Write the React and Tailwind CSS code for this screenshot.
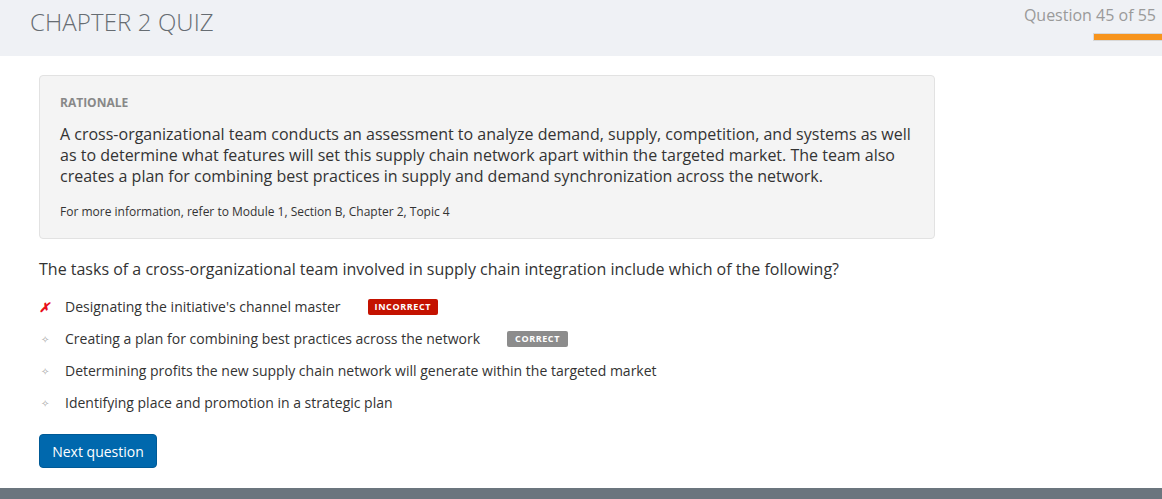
export default function App() {
  const answers = [
    { text: "Designating the initiative's channel master", mark: "x", badge: "INCORRECT" },
    { text: "Creating a plan for combining best practices across the network", mark: "dot", badge: "CORRECT" },
    { text: "Determining profits the new supply chain network will generate within the targeted market", mark: "dot" },
    { text: "Identifying place and promotion in a strategic plan", mark: "dot" },
  ];
  return (
    <div className="w-[1162px] h-[499px] bg-white flex flex-col overflow-hidden" style={{ fontFamily: '"Open Sans", sans-serif' }}>
      <header className="h-[56px] bg-[#eff1f5] flex justify-between shrink-0">
        <h1 className="pl-[30px] pt-[5px] text-[24px] font-light text-[#666c72] leading-[34px] tracking-[0.1px]">CHAPTER 2 QUIZ</h1>
        <div className="flex flex-col items-end">
          <div className="pr-[6px] pt-[4px] text-[16px] leading-[22px] text-[#9a9a9a]">Question 45 of 55</div>
          <div className="mt-[7px] w-[69px] h-[8px] bg-[#f7941d] border border-[#d8d8d8] border-r-0"></div>
        </div>
      </header>
      <main className="flex-1 pl-[39px] pt-[19px]">
        <section className="w-[896px] bg-[#f4f4f4] border border-[#e2e2e2] rounded-[4px] px-[20px] pt-[19px] pb-[18px]">
          <div className="text-[12px] font-bold text-[#888888] leading-[16px]">RATIONALE</div>
          <p className="mt-[13px] text-[16px] leading-[21px] text-[#333333]">
            A cross-organizational team conducts an assessment to analyze demand, supply, competition, and systems as well as to determine what features will set this supply chain network apart within the targeted market. The team also creates a plan for combining best practices in supply and demand synchronization across the network.
          </p>
          <p className="mt-[17px] text-[12px] leading-[16px] text-[#333333]">For more information, refer to Module 1, Section B, Chapter 2, Topic 4</p>
        </section>
        <p className="mt-[19px] text-[16px] leading-[22px] text-[#333333]">
          The tasks of a cross-organizational team involved in supply chain integration include which of the following?
        </p>
        <ul className="mt-[11px] flex flex-col">
          {answers.map((a, i) => (
            <li key={i} className="h-[32px] flex items-center">
              <span className="w-[11px] flex justify-center items-center">
                {a.mark === "x" ? (
                  <span className="text-[#e8101a] text-[13px] font-bold italic leading-none">✗</span>
                ) : (
                  <span className="text-[#aaaaaa] text-[10px] leading-none">✧</span>
                )}
              </span>
              <span className="ml-[15px] text-[14px] text-[#333333] leading-[20px]">{a.text}</span>
              {a.badge === "INCORRECT" && (
                <span className="ml-[27px] h-[16px] px-[7px] flex items-center rounded-[2px] bg-[#c41200] text-white text-[9px] font-bold tracking-[0.6px]">INCORRECT</span>
              )}
              {a.badge === "CORRECT" && (
                <span className="ml-[27px] h-[16px] px-[8px] flex items-center rounded-[2px] bg-[#8c8c8c] text-white text-[9px] font-bold tracking-[0.6px]">CORRECT</span>
              )}
            </li>
          ))}
        </ul>
        <button className="mt-[15px] w-[118px] h-[34px] bg-[#0068ad] border border-[#005a96] rounded-[4px] text-white text-[14px] font-normal">
          Next question
        </button>
      </main>
      <footer className="h-[11px] bg-[#6b757e] shrink-0"></footer>
    </div>
  );
}
